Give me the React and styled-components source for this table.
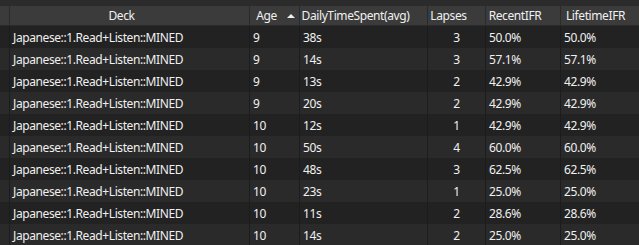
import React from 'react'
import styled, { createGlobalStyle } from 'styled-components'

const Global = createGlobalStyle`
  html, body {
    margin: 0;
    padding: 0;
    background: #2b2b2b;
  }
  body {
    font-family: 'Noto Sans', 'Open Sans', sans-serif;
    font-size: 12px;
    color: #f0f0f0;
  }
`

const COLS = '10px 240px 50px 128px 58px 75px 86px'

const Window = styled.div`
  width: 639px;
  height: 245px;
  overflow: hidden;
  background: #2b2b2b;
  padding-top: 6px;
  box-sizing: border-box;
`

const Grid = styled.div`
  display: grid;
  grid-template-columns: ${COLS};
  width: max-content;
`

const HeadCell = styled.div`
  height: 20px;
  box-sizing: border-box;
  background: #3b3b3b;
  border-right: 1px solid #2a2a2a;
  border-bottom: 1px solid #2a2a2a;
  display: flex;
  align-items: center;
  position: relative;
  white-space: nowrap;
  overflow: hidden;
`

const HeadLabel = styled.span`
  flex: 1;
  text-align: center;
  padding-right: 16px;
  letter-spacing: -0.4px;
`

const SortArrow = styled.span`
  position: absolute;
  right: 4px;
  top: 8px;
  width: 0;
  height: 0;
  border-left: 4px solid transparent;
  border-right: 4px solid transparent;
  border-bottom: 4px solid #f0f0f0;
`

const Cell = styled.div`
  height: 22px;
  box-sizing: border-box;
  background: ${p => (p.$odd ? '#2a2a2a' : '#222222')};
  border-right: 1px solid #1c1c1c;
  display: flex;
  align-items: center;
  justify-content: ${p => (p.$center ? 'center' : 'flex-start')};
  padding-left: ${p => (p.$center ? '0' : '3px')};
  white-space: nowrap;
  overflow: hidden;
  letter-spacing: -0.4px;
`

const RowHead = styled(Cell)`
  padding: 0;
`

const headers = ['Deck', 'Age', 'DailyTimeSpent(avg)', 'Lapses', 'RecentIFR', 'LifetimeIFR']

const rows = [
  ['9', '38s', '3', '50.0%', '50.0%'],
  ['9', '14s', '3', '57.1%', '57.1%'],
  ['9', '13s', '2', '42.9%', '42.9%'],
  ['9', '20s', '2', '42.9%', '42.9%'],
  ['10', '12s', '1', '42.9%', '42.9%'],
  ['10', '50s', '4', '60.0%', '60.0%'],
  ['10', '48s', '3', '62.5%', '62.5%'],
  ['10', '23s', '1', '25.0%', '25.0%'],
  ['10', '11s', '2', '28.6%', '28.6%'],
  ['10', '14s', '2', '25.0%', '25.0%'],
]

const App = () => {
  return (
    <Window>
      <Global />
      <Grid>
        <HeadCell />
        {headers.map(h => (
          <HeadCell key={h}>
            <HeadLabel>{h}</HeadLabel>
            {h === 'Age' && <SortArrow />}
          </HeadCell>
        ))}
        {rows.map((r, i) => (
          <React.Fragment key={i}>
            <RowHead $odd={i % 2 === 1} />
            <Cell $odd={i % 2 === 1}>Japanese::1.Read+Listen::MINED</Cell>
            <Cell $odd={i % 2 === 1}>{r[0]}</Cell>
            <Cell $odd={i % 2 === 1}>{r[1]}</Cell>
            <Cell $odd={i % 2 === 1} $center>{r[2]}</Cell>
            <Cell $odd={i % 2 === 1}>{r[3]}</Cell>
            <Cell $odd={i % 2 === 1}>{r[4]}</Cell>
          </React.Fragment>
        ))}
      </Grid>
    </Window>
  )
}

export default App
